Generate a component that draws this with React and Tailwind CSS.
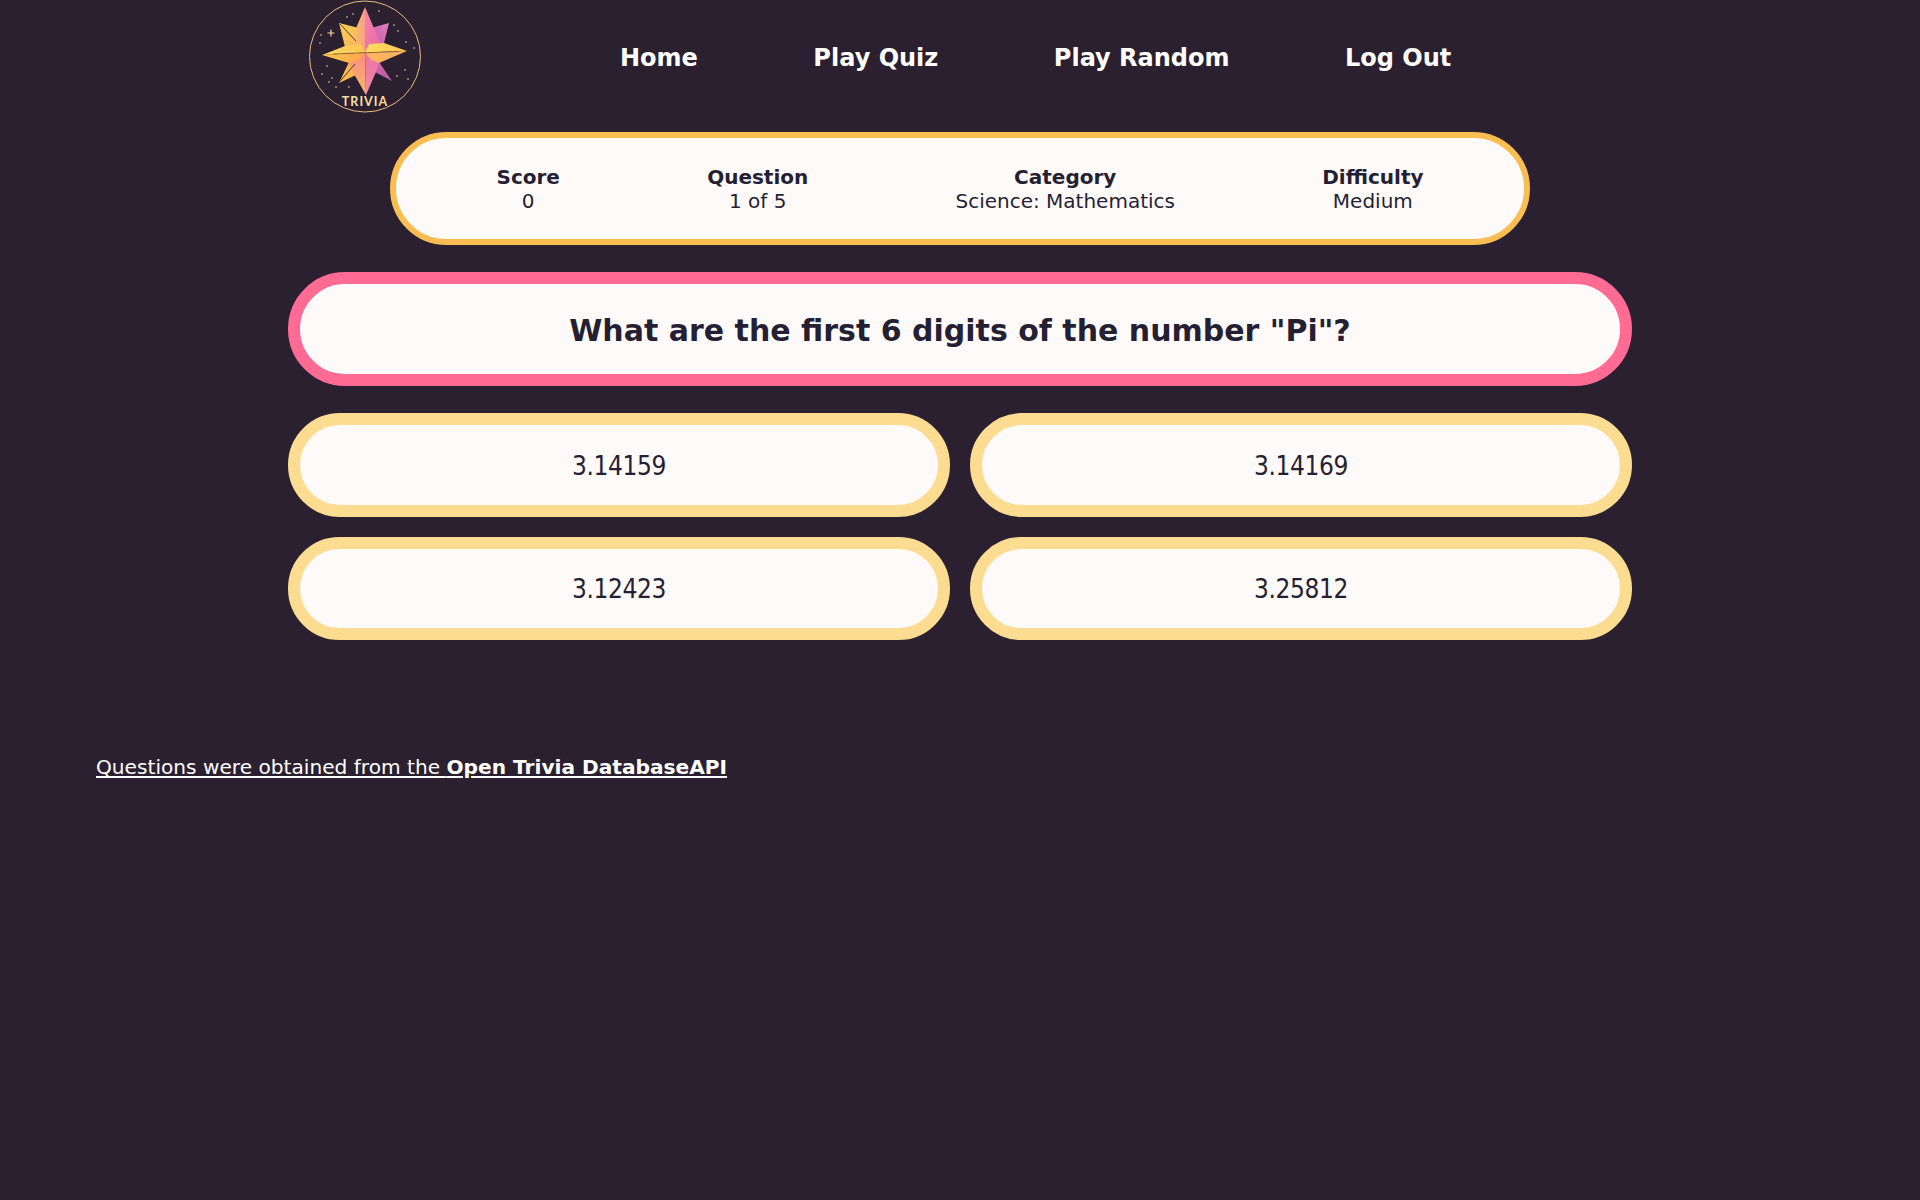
const stars = [[38,17],[44,14],[70,11],[85,25],[89,31],[97,42],[105,48],[11,43],[12,35],[18,66],[13,74],[23,78],[20,82],[27,87],[96,70],[99,79],[88,76],[40,87]]

function Logo() {
  return (
    <svg viewBox="0 0 113 113" className="w-[113px] h-[113px] shrink-0">
      <defs>
        <linearGradient id="topLeft" x1="0" y1="0" x2="1" y2="0">
          <stop offset="0" stopColor="#fdc05b" />
          <stop offset="1" stopColor="#f9a08a" />
        </linearGradient>
        <linearGradient id="topRight" x1="0" y1="0" x2="1" y2="1">
          <stop offset="0" stopColor="#f584b0" />
          <stop offset="1" stopColor="#e8689f" />
        </linearGradient>
        <linearGradient id="wingUL" x1="0" y1="0" x2="1" y2="1">
          <stop offset="0" stopColor="#fdd05a" />
          <stop offset="1" stopColor="#fbae4f" />
        </linearGradient>
        <linearGradient id="wingUR" x1="1" y1="0" x2="0" y2="1">
          <stop offset="0" stopColor="#ea7cc0" />
          <stop offset="1" stopColor="#a9559f" />
        </linearGradient>
        <linearGradient id="barUp" x1="0" y1="0" x2="1" y2="0">
          <stop offset="0" stopColor="#ffdc60" />
          <stop offset="1" stopColor="#fdc552" />
        </linearGradient>
        <linearGradient id="barDown" x1="0" y1="0" x2="1" y2="0">
          <stop offset="0" stopColor="#fdc74e" />
          <stop offset="1" stopColor="#fba64b" />
        </linearGradient>
        <linearGradient id="wingLL" x1="0" y1="1" x2="1" y2="0">
          <stop offset="0" stopColor="#fdc54c" />
          <stop offset="1" stopColor="#fba25e" />
        </linearGradient>
        <linearGradient id="wingLR" x1="1" y1="1" x2="0" y2="0">
          <stop offset="0" stopColor="#b45aa4" />
          <stop offset="1" stopColor="#e56da8" />
        </linearGradient>
        <linearGradient id="bottomLeft" x1="0" y1="0" x2="0" y2="1">
          <stop offset="0" stopColor="#f98c80" />
          <stop offset="1" stopColor="#fbb768" />
        </linearGradient>
        <linearGradient id="bottomRight" x1="0" y1="0" x2="0" y2="1">
          <stop offset="0" stopColor="#ee6fa8" />
          <stop offset="1" stopColor="#f08fa0" />
        </linearGradient>
      </defs>
      <circle cx="56" cy="56.5" r="55.5" fill="#2a2030" stroke="#e8bd78" strokeWidth="1" />
      {stars.map(([x, y], i) => (
        <circle key={i} cx={x} cy={y} r="0.8" fill="#f2dcae" />
      ))}
      <path d="M18.5 33h7M22 29.5v7" stroke="#f2d79a" strokeWidth="1.2" />

      <polygon points="30,23 50,28 56,52 36,47" fill="url(#wingUL)" />
      <polygon points="80,23 62,28 56,52 75,43" fill="url(#wingUR)" />
      <polygon points="30,83 40,62 56,52 47,75" fill="url(#wingLL)" />
      <polygon points="83,81 70,62 56,52 66,72" fill="url(#wingLR)" />
      <polygon points="56,7 45,33 44,44 56,53" fill="url(#topLeft)" />
      <polygon points="56,7 67,33 72,44 56,53" fill="url(#topRight)" />
      <polygon points="56,53 40,63 45,74 57,95" fill="url(#bottomLeft)" />
      <polygon points="56,53 70,63 67,72 57,95" fill="url(#bottomRight)" />
      <polygon points="13,55 36,46 52,44 56,52.5" fill="url(#barUp)" />
      <polygon points="60,44 75,43 98,51 56,52.5" fill="url(#barUp)" />
      <polygon points="13,55 56,52.5 50,60 40,63" fill="url(#barDown)" />
      <polygon points="98,51 56,52.5 62,60 70,63" fill="#fbb35f" />
      <path d="M31 24 L47 41" stroke="#3a2a2c" strokeWidth="0.9" />
      <path d="M30 82.5 L46 64" stroke="#3a2a2c" strokeWidth="0.9" />
      <path d="M24 54 L90 51.5" stroke="#5d3c2c" strokeWidth="0.6" />

      <text x="56" y="106" textAnchor="middle" fill="#f9dfa4" fontSize="12.5" fontWeight="700" fontFamily="Lato, sans-serif" letterSpacing="1">TRIVIA</text>
    </svg>
  )
}

function Stat({ label, value }) {
  return (
    <div className="text-center">
      <div className="font-bold">{label}</div>
      <div>{value}</div>
    </div>
  )
}

function Answer({ text }) {
  return (
    <button className="h-[103.6px] pt-[3px] rounded-full border-[12px] border-[#fbdc90] bg-[#fffafa] text-[#251f33] text-[26px] tracking-[-0.4px] [font-family:'DejaVu_Sans_Condensed','DejaVu_Sans',sans-serif]">
      {text}
    </button>
  )
}

export default function App() {
  return (
    <div className="min-h-[1200px] bg-[#2a2030] [font-family:'DejaVu_Sans',sans-serif] text-white">
      <nav className="flex items-center h-[113px] pl-[309px]">
        <Logo />
        <ul className="flex text-[24px] font-bold ml-[198px] gap-[115.5px] pt-[2px]">
          <li>Home</li>
          <li>Play Quiz</li>
          <li>Play Random</li>
          <li>Log Out</li>
        </ul>
      </nav>

      <div className="mx-auto w-[1344px] pt-[19px]">
        <div className="mx-auto w-[1140px] h-[113px] rounded-full border-[6px] border-[#f9bd52] bg-[#fffafa] text-[#251f33] text-[20px] leading-[24px] flex items-center justify-between px-[100.5px]">
          <Stat label="Score" value="0" />
          <Stat label="Question" value="1 of 5" />
          <Stat label="Category" value="Science: Mathematics" />
          <Stat label="Difficulty" value="Medium" />
        </div>

        <div className="mt-[27px] h-[114px] rounded-full border-[12px] border-[#ff6b93] bg-[#fffafa] text-[#251f33] text-[30px] font-bold flex items-center justify-center pt-[2px]">
          What are the first 6 digits of the number "Pi"?
        </div>

        <div className="grid grid-cols-2 gap-[20px] mt-[27px]">
          <Answer text="3.14159" />
          <Answer text="3.14169" />
          <Answer text="3.12423" />
          <Answer text="3.25812" />
        </div>
      </div>

      <p className="mt-[112px] ml-[96px] text-[20.15px] underline">
        Questions were obtained from the <b>Open Trivia DatabaseAPI</b>
      </p>
    </div>
  )
}
